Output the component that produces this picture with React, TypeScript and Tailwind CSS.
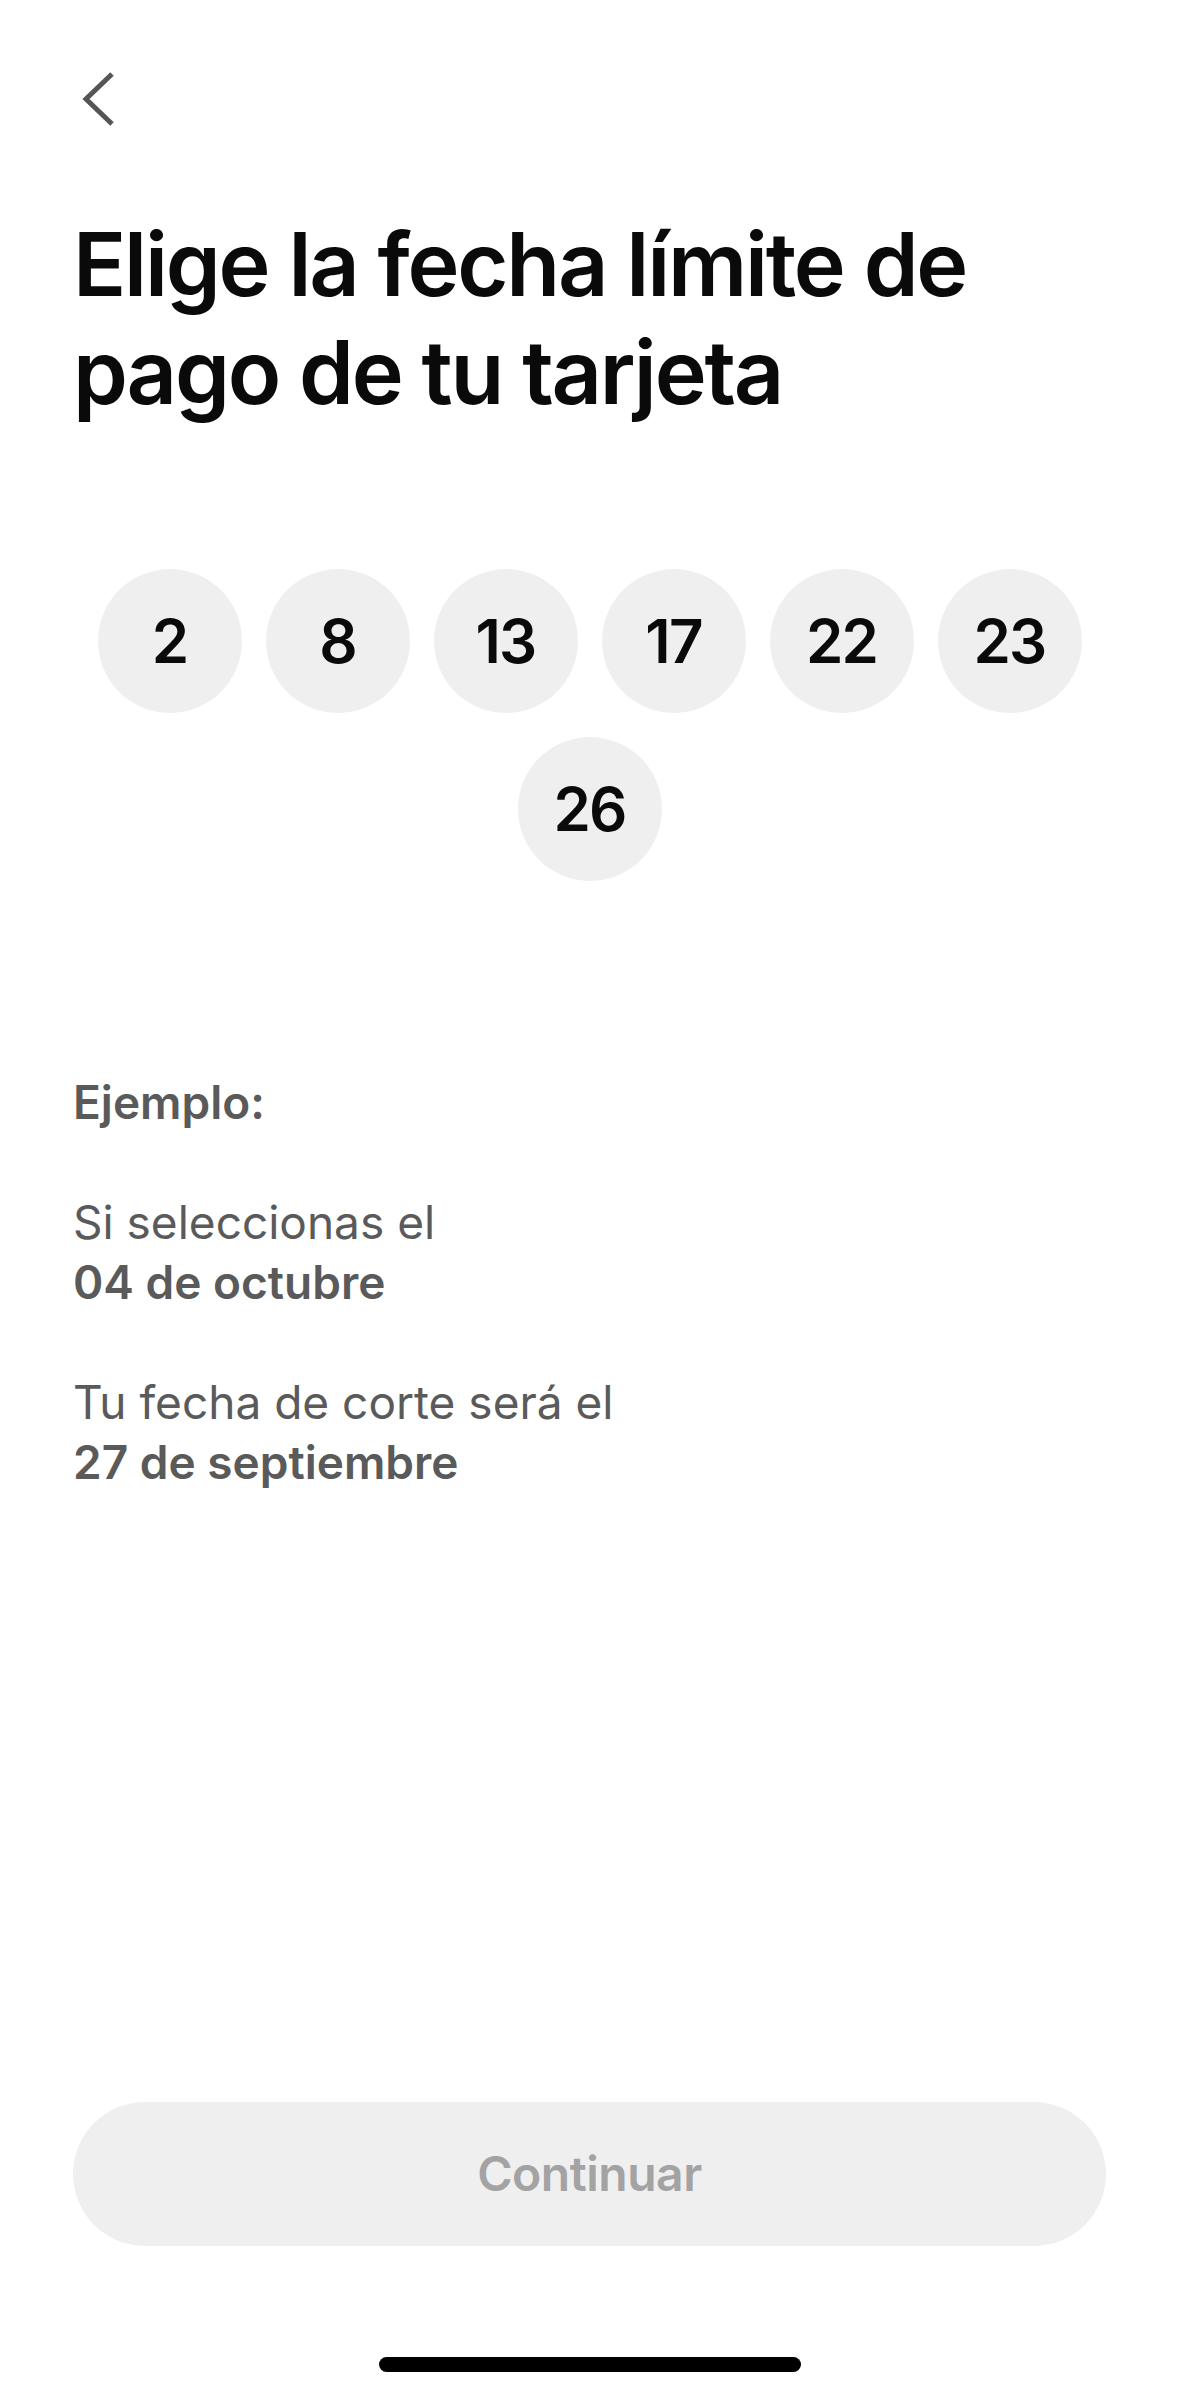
const DAYS = [2, 8, 13, 17, 22, 23, 26];

export default function App() {
  return (
    <main
      className="flex h-[2396px] w-full flex-col bg-white"
      style={{ fontFamily: "Inter, 'Noto Sans', sans-serif" }}
    >
      {/* Back */}
      <header className="pl-[82px] pt-[71px]">
        <button className="block h-[56px] w-[32px]" aria-label="Volver">
          <svg width="32" height="56" viewBox="0 0 32 56" fill="none">
            <polyline
              points="30,3 4,28 30,53"
              stroke="#555555"
              strokeWidth="5"
              strokeLinejoin="miter"
            />
          </svg>
        </button>
      </header>

      <h1 className="mt-[83px] px-[73px] text-[88px] font-semibold leading-[108px] tracking-[-0.025em] text-[#0a0a0a]">
        Elige la fecha límite de
        <br />
        pago de tu tarjeta
      </h1>

      {/* Days */}
      <div className="mt-[143px] flex flex-wrap justify-center gap-[24px] px-[73px]">
        {DAYS.map((d) => (
          <button
            key={d}
            className="flex h-[144px] w-[144px] items-center justify-center rounded-full bg-[#efefef] text-[60px] font-semibold tracking-[-0.03em] text-[#0a0a0a]"
          >
            {d}
          </button>
        ))}
      </div>

      {/* Example */}
      <section className="mt-[191px] flex flex-col gap-[60px] px-[73px] text-[46px] leading-[60px] text-[#5a5a5a]">
        <p className="font-semibold">Ejemplo:</p>
        <p>
          Si seleccionas el
          <br />
          <span className="font-semibold">04 de octubre</span>
        </p>
        <p>
          Tu fecha de corte será el
          <br />
          <span className="font-semibold">27 de septiembre</span>
        </p>
      </section>

      <div className="flex-1" />

      <div className="px-[73px]">
        <button
          disabled
          className="flex h-[144px] w-full items-center justify-center rounded-full bg-[#efefef] text-[48px] font-semibold tracking-[-0.01em] text-[#a3a3a3]"
        >
          Continuar
        </button>
      </div>

      <div className="mb-[24px] mt-[111px] flex justify-center">
        <div className="h-[15px] w-[422px] rounded-full bg-black" />
      </div>
    </main>
  );
}
